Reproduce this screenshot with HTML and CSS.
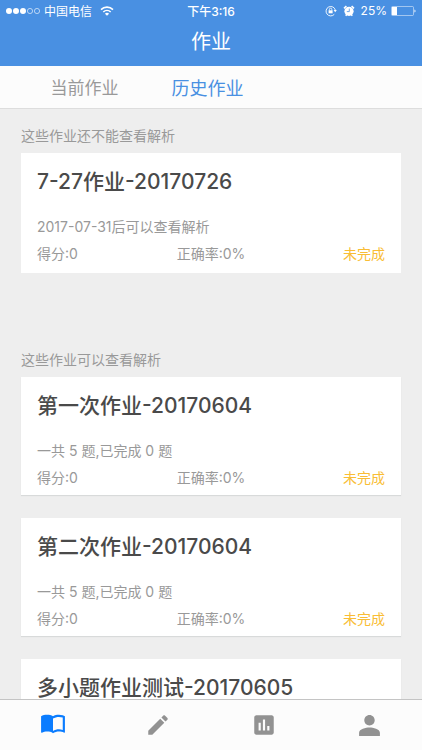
FILE: index.html
```
<!DOCTYPE html>
<html lang="zh-Hans">
<head>
  <meta charset="UTF-8">
  <meta name="viewport" content="width=device-width, initial-scale=1">
  <title>作业</title>
  <link rel="stylesheet" href="styles.css">
</head>
<body>
  <header class="header">
    <div class="status">
      <div class="status-left">
        <svg class="signal" width="34" height="8" viewBox="0 0 34 8">
          <g fill="#fff">
            <circle cx="3" cy="4" r="3"/>
            <circle cx="10" cy="4" r="3"/>
            <circle cx="17" cy="4" r="3"/>
          </g>
          <g fill="none" stroke="#fff" stroke-width=".6">
            <circle cx="24" cy="4" r="2.6"/>
            <circle cx="31" cy="4" r="2.6"/>
          </g>
        </svg>
        <span>中国电信</span>
        <svg class="wifi" width="14" height="10" viewBox="0 0 14 10" fill="none" stroke="#fff" stroke-width="1.6">
          <path d="M1 3.6a8.6 8.6 0 0 1 12 0"/>
          <path d="M3.3 6a5.4 5.4 0 0 1 7.4 0"/>
          <path d="M7 9.8L4.9 7.7a3 3 0 0 1 4.2 0z" fill="#fff" stroke="none"/>
        </svg>
      </div>
      <span class="time">下午3:16</span>
      <div class="status-right">
        <svg width="12" height="12" viewBox="0 0 12 12" fill="none" stroke="#fff">
          <path d="M9.3 9.3A4.7 4.7 0 1 1 10.3 5" stroke-width=".9"/>
          <path d="M8.6 5h3.2l-1.6 2.2z" fill="#fff" stroke="none"/>
          <rect x="3.6" y="5.3" width="4" height="3" fill="#fff" stroke="none"/>
          <path d="M4.4 5.5V4.4a1.2 1.2 0 0 1 2.4 0v1.1" stroke-width=".8"/>
        </svg>
        <svg width="12" height="12" viewBox="0 0 12 12">
          <circle cx="6" cy="6.3" r="4.6" fill="#fff"/>
          <path d="M1 3.4L3.4 1M11 3.4L8.6 1M2.7 10.8L3.6 9.7M9.3 10.8L8.4 9.7" stroke="#fff" stroke-width="1.5"/>
          <path d="M6.3 3.6V6.6H3.8" fill="none" stroke="#4990e2" stroke-width=".8"/>
        </svg>
        <span>25%</span>
        <svg class="battery" width="25" height="10" viewBox="0 0 25 10">
          <rect x=".5" y=".5" width="22" height="9" rx="1" fill="none" stroke="#fff" stroke-opacity=".7" stroke-width=".7"/>
          <rect x="1" y="1" width="5" height="8" fill="#fff"/>
          <path d="M23.5 3.4c1.3.4 1.3 2.8 0 3.2z" fill="#fff"/>
        </svg>
      </div>
    </div>
    <h1>作业</h1>
  </header>

  <nav class="tabs">
    <a href="#current">当前作业</a>
    <a href="#history" class="active">历史作业</a>
  </nav>

  <main>
    <section class="group locked">
      <h2>这些作业还不能查看解析</h2>
      <article class="card">
        <h3>7-27作业-20170726</h3>
        <p class="info">2017-07-31后可以查看解析</p>
        <div class="result">
          <span>得分:0</span>
          <span>正确率:0%</span>
          <span class="state">未完成</span>
        </div>
      </article>
    </section>

    <section class="group">
      <h2>这些作业可以查看解析</h2>
      <article class="card">
        <h3>第一次作业-20170604</h3>
        <p class="info">一共 5 题,已完成 0 题</p>
        <div class="result">
          <span>得分:0</span>
          <span>正确率:0%</span>
          <span class="state">未完成</span>
        </div>
      </article>
      <article class="card">
        <h3>第二次作业-20170604</h3>
        <p class="info">一共 5 题,已完成 0 题</p>
        <div class="result">
          <span>得分:0</span>
          <span>正确率:0%</span>
          <span class="state">未完成</span>
        </div>
      </article>
      <article class="card">
        <h3>多小题作业测试-20170605</h3>
      </article>
    </section>
  </main>

  <nav class="bottom-bar">
    <a href="#homework" class="active" aria-label="作业">
      <svg width="26" height="26" viewBox="0 2 24 24" fill="currentColor">
        <path d="M21 5c-1.11-.35-2.33-.5-3.5-.5-1.95 0-4.05.4-5.5 1.5-1.45-1.1-3.55-1.5-5.5-1.5S2.45 4.9 1 6v14.65c0 .25.25.5.5.5.1 0 .15-.05.25-.05C3.1 20.45 5.05 20 6.5 20c1.95 0 4.05.4 5.5 1.5 1.35-.85 3.8-1.5 5.5-1.5 1.65 0 3.35.3 4.75 1.05.1.05.15.05.25.05.25 0 .5-.25.5-.5V6c-.6-.45-1.25-.75-2-1zm0 13.5c-1.1-.35-2.3-.5-3.5-.5-1.7 0-4.15.65-5.5 1.5V8c1.35-.85 3.8-1.5 5.5-1.5 1.2 0 2.4.15 3.5.5v11.5z"/>
      </svg>
    </a>
    <a href="#practice" aria-label="练习">
      <svg width="26" height="26" viewBox="0 0 24 24" fill="currentColor">
        <path d="M3 17.25V21h3.75L17.81 9.94l-3.75-3.75L3 17.25zM20.71 7.04c.39-.39.39-1.02 0-1.41l-2.34-2.34c-.39-.39-1.02-.39-1.41 0l-1.83 1.83 3.75 3.75 1.83-1.83z"/>
      </svg>
    </a>
    <a href="#report" aria-label="报告">
      <svg width="26" height="26" viewBox="0 0 24 24" fill="currentColor">
        <path d="M19 3H5c-1.1 0-2 .9-2 2v14c0 1.1.9 2 2 2h14c1.1 0 2-.9 2-2V5c0-1.1-.9-2-2-2zM9 17H7v-7h2v7zm4 0h-2V7h2v10zm4 0h-2v-4h2v4z"/>
      </svg>
    </a>
    <a href="#me" aria-label="我的">
      <svg width="25" height="25" viewBox="0 0 24 24" fill="currentColor">
        <path d="M12 12c2.76 0 5-2.24 5-5s-2.24-5-5-5-5 2.24-5 5 2.24 5 5 5zm0 2c-3.5 0-10 1.5-10 5v3h20v-3c0-3.5-6.5-5-10-5z"/>
      </svg>
    </a>
  </nav>
</body>
</html>
```
FILE: styles.css
```
* {
  box-sizing: border-box;
}

body {
  margin: 0;
  height: 100vh;
  display: flex;
  flex-direction: column;
  overflow: hidden;
  background-color: #eee;
  color: #999;
  font-family: Inter, "Noto Sans CJK SC", sans-serif;
  font-size: 14px;
}

h1, h2, h3, p {
  margin: 0;
  font-weight: normal;
}

a {
  text-decoration: none;
  color: inherit;
}

svg {
  display: block;
}

/* 顶部 */
.header {
  flex: none;
  height: 66px;
  background-color: #4990e2;
  color: #fff;
}

.status {
  display: grid;
  grid-template-columns: 1fr auto 1fr;
  align-items: center;
  height: 21px;
  padding: 0 6px;
  font-size: 12px;
}

.status-left, .status-right {
  display: flex;
  align-items: center;
  gap: 4px;
}

.wifi {
  margin-left: 4px;
}

.time {
  font-weight: 500;
}

.status-right {
  justify-content: flex-end;
}

.status-right svg {
  margin-right: 2px;
}

.status-right .battery {
  margin-right: 0;
}

.header h1 {
  font-size: 20px;
  line-height: 43px;
  text-align: center;
}

.tabs {
  flex: none;
  display: flex;
  height: 43px;
  padding-left: 23px;
  background-color: #fcfcfc;
  border-bottom: 1px solid #ddd;
}

.tabs a {
  width: 123px;
  font-size: 17px;
  line-height: 45px;
  text-align: center;
}

.tabs .active {
  font-size: 18px;
  color: #4990e2;
}

/* 作业列表 */
main {
  flex: 1;
  min-height: 0;
  overflow: hidden;
  padding: 17px 21px 0;
}

.group h2 {
  font-size: 14px;
  line-height: 20px;
  margin-bottom: 7px;
}

.card {
  padding: 14px 16px 4px;
  margin-bottom: 23px;
  background-color: #fff;
  box-shadow: 0 1px 1px #d8dada;
}

.locked .card {
  padding-bottom: 6px;
  margin-bottom: 77px;
  box-shadow: none;
}

.card h3 {
  margin-bottom: 16px;
  font-size: 21px;
  font-weight: 500;
  line-height: 30px;
  color: #4a4a4a;
}

.info {
  line-height: 28px;
}

.result {
  display: grid;
  grid-template-columns: 1fr auto 1fr;
  line-height: 26px;
}

.state {
  color: #f9bd35;
  text-align: right;
}

/* 底部导航 */
.bottom-bar {
  flex: none;
  display: flex;
  height: 51px;
  background-color: #fcfcfc;
  border-top: 1px solid #c4c4c4;
  color: #929292;
}

.bottom-bar a {
  flex: 1;
  display: flex;
  justify-content: center;
  align-items: center;
}

.bottom-bar .active {
  color: #0a7cff;
}
```
